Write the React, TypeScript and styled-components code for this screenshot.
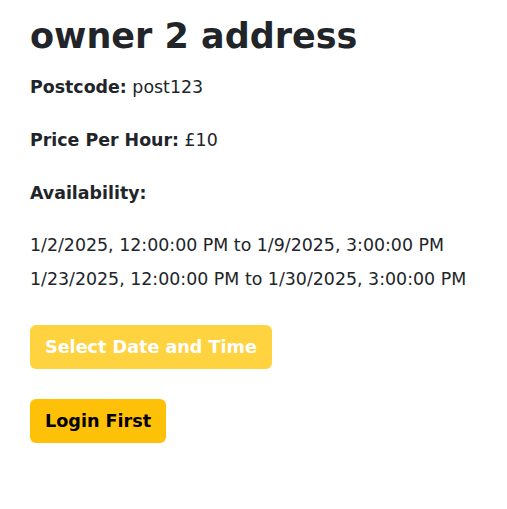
import React from "react";
import styled, { createGlobalStyle } from "styled-components";

const Global = createGlobalStyle`
  html, body { margin: 0; padding: 0; background: #fff; }
  body { font-family: "DejaVu Sans", "Noto Sans", sans-serif; color: #212529; }
`;

const Page = styled.div`
  display: flex;
  flex-direction: column;
  align-items: flex-start;
  padding: 14px 30px 0 30px;
`;

const Title = styled.h1`
  margin: 0 0 16px 0;
  font-size: 35px;
  line-height: 44px;
  font-weight: 700;
`;

const Field = styled.p<{ $gap?: number }>`
  margin: 0 0 ${(p) => p.$gap ?? 27}px 0;
  font-size: 17.4px;
  line-height: 26px;
`;

const Label = styled.strong`
  font-weight: 700;
`;

const Ranges = styled.div`
  display: flex;
  flex-direction: column;
  margin-bottom: 29px;
`;

const Range = styled.div`
  font-size: 17.4px;
  line-height: 34px;
`;

const Button = styled.button<{ $variant: "disabled" | "primary" }>`
  font-family: inherit;
  font-size: 17.6px;
  font-weight: 700;
  height: 44px;
  padding: 0 15px;
  border: none;
  border-radius: 6px;
  background: ${(p) => (p.$variant === "disabled" ? "#ffd23f" : "#ffc107")};
  color: ${(p) => (p.$variant === "disabled" ? "#ffffff" : "#000000")};
  margin-bottom: 30px;
  cursor: pointer;
`;

export default function App() {
  return (
    <>
      <Global />
      <Page>
        <Title>owner 2 address</Title>
        <Field>
          <Label>Postcode:</Label> post123
        </Field>
        <Field>
          <Label>Price Per Hour:</Label> £10
        </Field>
        <Field $gap={22}>
          <Label>Availability:</Label>
        </Field>
        <Ranges>
          <Range>1/2/2025, 12:00:00 PM to 1/9/2025, 3:00:00 PM</Range>
          <Range>1/23/2025, 12:00:00 PM to 1/30/2025, 3:00:00 PM</Range>
        </Ranges>
        <Button $variant="disabled" disabled>
          Select Date and Time
        </Button>
        <Button $variant="primary">Login First</Button>
      </Page>
    </>
  );
}
